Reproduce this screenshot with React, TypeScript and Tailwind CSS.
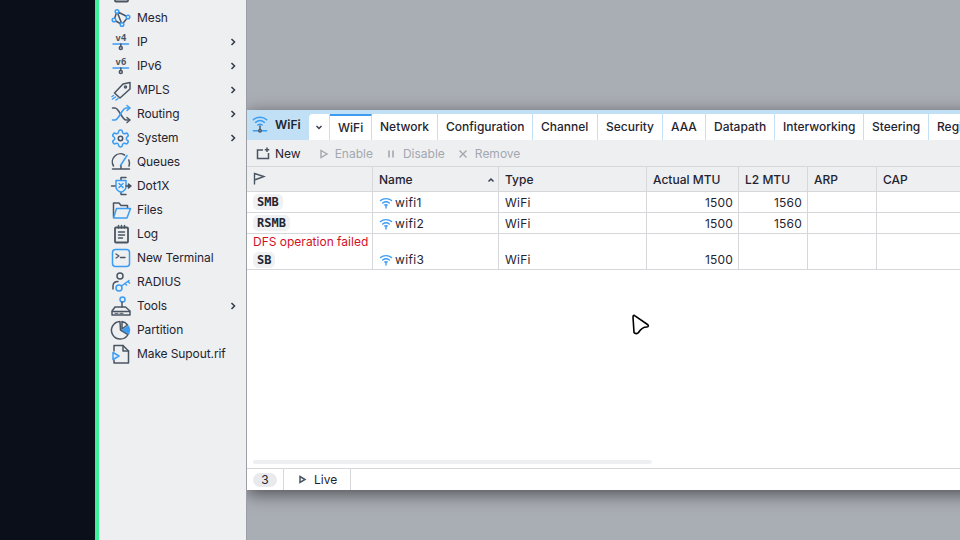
import type { ReactNode } from 'react';

const DARK = '#4a5563';
const BLUE = '#3b9cf2';

function Icon({ children }: { children: ReactNode }) {
  return (
    <svg width="22" height="22" viewBox="0 0 22 22" fill="none" strokeWidth="1.5" strokeLinecap="round" strokeLinejoin="round" className="shrink-0">
      {children}
    </svg>
  );
}

const MeshIcon = () => (
  <Icon>
    <path d="M7 4.5 L18 10 L12 17.5 Z M7 4.5 L4 13 L12 17.5" stroke={DARK} />
    <circle cx="7" cy="4.5" r="1.8" stroke={BLUE} fill="#eeeff1" />
    <circle cx="18" cy="10" r="1.8" stroke={BLUE} fill="#eeeff1" />
    <circle cx="4" cy="13" r="1.8" stroke={BLUE} fill="#eeeff1" />
    <circle cx="12" cy="17.5" r="1.8" stroke={BLUE} fill="#eeeff1" />
  </Icon>
);

const IpIcon = ({ label }: { label: string }) => (
  <Icon>
    <text x="10.8" y="10" textAnchor="middle" fontSize="9.5" fontWeight="700" fontFamily="'DejaVu Sans Mono', monospace" fill={DARK}>{label}</text>
    <path d="M3 13 H18.5" stroke={BLUE} />
    <path d="M10.8 13 V15.5" stroke={DARK} />
    <circle cx="10.8" cy="17" r="1.5" stroke={DARK} />
  </Icon>
);

const MplsIcon = () => (
  <Icon>
    <path d="M10 19 L4.5 14 L13 5 L20 3.5 L20 10 Z" stroke={DARK} />
    <circle cx="15.5" cy="8" r="1" stroke={DARK} />
    <path d="M2.5 20 L5.5 18 M6 21 L8 19.5 M2 17.5 L3.5 16.5" stroke={BLUE} />
  </Icon>
);

const RoutingIcon = () => (
  <Icon>
    <path d="M2.5 5 H5 C9 5 12 17 16 17 H19.5" stroke={DARK} />
    <path d="M2.5 17 H5 C9 17 12 5 16 5 H19.5" stroke={BLUE} />
    <path d="M17 2.5 L20 5 L17 7.5" stroke={BLUE} />
    <path d="M17 14.5 L20 17 L17 19.5" stroke={DARK} />
  </Icon>
);

const SystemIcon = () => (
  <Icon>
    <g transform="translate(0.3 1.3) scale(0.85)">
      <path
        stroke={BLUE}
        strokeWidth="1.8"
        d="M12.22 2h-.44a2 2 0 0 0-2 2v.18a2 2 0 0 1-1 1.73l-.43.25a2 2 0 0 1-2 0l-.15-.08a2 2 0 0 0-2.73.73l-.22.38a2 2 0 0 0 .73 2.73l.15.1a2 2 0 0 1 1 1.72v.51a2 2 0 0 1-1 1.74l-.15.09a2 2 0 0 0-.73 2.73l.22.38a2 2 0 0 0 2.73.73l.15-.08a2 2 0 0 1 2 0l.43.25a2 2 0 0 1 1 1.73V20a2 2 0 0 0 2 2h.44a2 2 0 0 0 2-2v-.18a2 2 0 0 1 1-1.73l.43-.25a2 2 0 0 1 2 0l.15.08a2 2 0 0 0 2.73-.73l.22-.39a2 2 0 0 0-.73-2.73l-.15-.08a2 2 0 0 1-1-1.74v-.5a2 2 0 0 1 1-1.74l.15-.09a2 2 0 0 0 .73-2.73l-.22-.38a2 2 0 0 0-2.73-.73l-.15.08a2 2 0 0 1-2 0l-.43-.25a2 2 0 0 1-1-1.73V4a2 2 0 0 0-2-2z"
      />
      <circle cx="12" cy="12" r="2.6" stroke={DARK} strokeWidth="1.8" />
    </g>
  </Icon>
);

const QueuesIcon = () => (
  <Icon>
    <path d="M3.5 15 A8 8 0 0 1 14.5 4" stroke={DARK} />
    <path d="M18.8 9 A8 8 0 0 1 19 15" stroke={DARK} />
    <path d="M10.5 14.5 L17 4.5" stroke={BLUE} />
    <path d="M2.5 18 H19.5 M11 15 V18" stroke={DARK} />
  </Icon>
);

const DotIcon = () => (
  <Icon>
    <path d="M11 2.5 H16 M11 19.5 H16 M11 2.5 V5 M11 17 V19.5" stroke={DARK} />
    <path d="M6 5.5 H16 V12 C16 15 13 16.5 11 17.5 C9 16.5 6 15 6 12 Z" stroke={BLUE} />
    <path d="M9 8.5 L13 12.5 M13 8.5 L9 12.5" stroke={BLUE} />
    <path d="M1.5 11 H5 M16 11 H19" stroke={DARK} />
    <path d="M18.5 9 L21 11 L18.5 13 Z" fill={DARK} stroke={DARK} />
  </Icon>
);

const FilesIcon = () => (
  <Icon>
    <path d="M3.5 18 V4 H9 L11 6.5 H17.5 V9" stroke={DARK} />
    <path d="M3.5 19 L6.5 9.5 H20.5 L17 19 Z" stroke={BLUE} />
  </Icon>
);

const LogIcon = () => (
  <Icon>
    <rect x="5" y="4.5" width="13" height="15" rx="1" stroke={DARK} strokeWidth="1.8" />
    <path d="M8.5 2.5 V5 M11.5 2.5 V5 M14.5 2.5 V5" stroke={DARK} />
    <path d="M8.5 9 H14.5 M8.5 12 H14.5 M8.5 15 H12.5" stroke={DARK} />
  </Icon>
);

const TerminalIcon = () => (
  <Icon>
    <rect x="2.5" y="2.5" width="17" height="17" rx="3" stroke={BLUE} />
    <path d="M6 7 L9 9 L6 11" stroke={DARK} strokeWidth="1.2" />
    <path d="M10.5 10.5 H15" stroke={DARK} />
  </Icon>
);

const RadiusIcon = () => (
  <Icon>
    <circle cx="10" cy="5" r="3" stroke={DARK} />
    <path d="M3 18 V15 C3 12 5 10.5 8 10.5" stroke={DARK} />
    <circle cx="9" cy="17" r="3" stroke={BLUE} />
    <path d="M11.5 15 L19 9.5 M15 12.5 L16.5 14 M18 10.5 L19.5 12" stroke={BLUE} />
  </Icon>
);

const ToolsIcon = () => (
  <Icon>
    <circle cx="12.5" cy="4.5" r="2.5" stroke={BLUE} />
    <path d="M12 7 V12" stroke={DARK} />
    <path d="M8 12 H15.5 L20 16 V20 H2 V16 L5 12 H8 M2 16.5 H20" stroke={DARK} />
    <path d="M5 18.3 H8 M10 18.3 H13" stroke={DARK} strokeWidth="1" />
  </Icon>
);

const PartitionIcon = () => (
  <Icon>
    <path d="M10 2.5 A8.8 8.8 0 1 0 18 15.5 L10.5 11 Z" stroke={DARK} strokeWidth="1.5" />
    <path d="M12 2.5 A8.8 8.8 0 0 1 17.5 6 L12 10 Z" stroke={DARK} strokeWidth="1.5" />
    <path d="M13 11 L18.5 7.2 A9 9 0 0 1 18.8 14.5 Z" fill={BLUE} stroke={BLUE} />
  </Icon>
);

const SupoutIcon = () => (
  <Icon>
    <path d="M4 8 V2.5 H13 L18.5 8 V20 H4 V17" stroke={DARK} />
    <path d="M13 2.5 V8 H18.5" stroke={DARK} />
    <path d="M3 9.5 L9 13 L3 16.5 Z" stroke={BLUE} />
  </Icon>
);

const menu: { label: string; icon: ReactNode; sub?: boolean }[] = [
  { label: 'Mesh', icon: <MeshIcon /> },
  { label: 'IP', icon: <IpIcon label="v4" />, sub: true },
  { label: 'IPv6', icon: <IpIcon label="v6" />, sub: true },
  { label: 'MPLS', icon: <MplsIcon />, sub: true },
  { label: 'Routing', icon: <RoutingIcon />, sub: true },
  { label: 'System', icon: <SystemIcon />, sub: true },
  { label: 'Queues', icon: <QueuesIcon /> },
  { label: 'Dot1X', icon: <DotIcon /> },
  { label: 'Files', icon: <FilesIcon /> },
  { label: 'Log', icon: <LogIcon /> },
  { label: 'New Terminal', icon: <TerminalIcon /> },
  { label: 'RADIUS', icon: <RadiusIcon /> },
  { label: 'Tools', icon: <ToolsIcon />, sub: true },
  { label: 'Partition', icon: <PartitionIcon /> },
  { label: 'Make Supout.rif', icon: <SupoutIcon /> },
];

const tabs = [
  { label: 'WiFi', w: 'w-[42px]', active: true },
  { label: 'Network', w: 'w-[66px]' },
  { label: 'Configuration', w: 'w-[95px]' },
  { label: 'Channel', w: 'w-[65px]' },
  { label: 'Security', w: 'w-[65px]' },
  { label: 'AAA', w: 'w-[43px]' },
  { label: 'Datapath', w: 'w-[69px]' },
  { label: 'Interworking', w: 'w-[89px]' },
  { label: 'Steering', w: 'w-[65px]' },
  { label: 'Regi', w: 'w-[60px]' },
];

const columns = ['w-[126px]', 'w-[126px]', 'w-[148px]', 'w-[92px]', 'w-[69px]', 'w-[69px]', 'w-[120px]'];

const rows = [
  { chip: 'SMB', name: 'wifi1', actual: '1500', l2: '1560', height: 'h-[21px]' },
  { chip: 'RSMB', name: 'wifi2', actual: '1500', l2: '1560', height: 'h-[21px]' },
  { chip: 'SB', name: 'wifi3', actual: '1500', l2: '', height: 'h-[36px]', error: 'DFS operation failed' },
];

function Chevron() {
  return (
    <svg width="8" height="8" viewBox="0 0 8 8" fill="none" stroke="#374151" strokeWidth="1.6" className="ml-auto mr-[9px]">
      <path d="M2.5 1 L5.5 4 L2.5 7" />
    </svg>
  );
}

function WifiSmall() {
  return (
    <svg width="14" height="12" viewBox="0 0 14 12" fill="none" stroke={BLUE} strokeWidth="1.4" strokeLinecap="round" className="shrink-0">
      <path d="M1.5 3.5 C4.5 1 9.5 1 12.5 3.5" />
      <path d="M3.7 6 C5.7 4.5 8.3 4.5 10.3 6" />
      <path d="M7 8 V11" />
      <path d="M5.8 8 H8.2" />
    </svg>
  );
}

function ToolButton({ icon, label, disabled, className }: { icon: ReactNode; label: string; disabled?: boolean; className: string }) {
  return (
    <div className={`flex items-center ${className} ${disabled ? 'text-[#a3a8b0]' : 'text-[#1f2430]'}`}>
      {icon}
      <span>{label}</span>
    </div>
  );
}

function HeaderCell({ width, children, last }: { width: string; children: ReactNode; last?: boolean }) {
  return (
    <div className={`${width} shrink-0 flex items-center px-[6px] pt-[2px] font-medium ${last ? '' : 'border-r border-[#d5d7db]'}`}>
      {children}
    </div>
  );
}

export default function App() {
  return (
    <div className="w-[960px] h-[540px] flex overflow-hidden bg-[#0b0f19] font-['Inter',sans-serif] text-[12px] text-[#1f2430]">
      <div className="w-[95px] shrink-0 bg-[#0b0f19]" />
      <div className="w-[4px] shrink-0 bg-[#3df29a]" />

      <nav className="w-[148px] shrink-0 bg-[#eeeff1] border-r border-[#9a9ea5] overflow-hidden tracking-[-0.1px]">
        <div className="h-[6px] overflow-hidden">
          <div className="ml-[11px] -mt-[18px]">
            <LogIcon />
          </div>
        </div>
        {menu.map((item) => (
          <div key={item.label} className="h-[24px] flex items-center pl-[11px]">
            {item.icon}
            <span className="ml-[5px]">{item.label}</span>
            {item.sub && <Chevron />}
          </div>
        ))}
      </nav>

      <main className="flex-1 min-w-0 bg-[#a9adb4] pt-[110px] overflow-hidden">
        <div className="w-[760px] h-[380px] flex flex-col bg-white shadow-[0_4px_16px_rgba(0,0,0,0.55)]">
          <div className="h-[30px] shrink-0 flex items-end bg-[#c1dff5]">
            <div className="w-[62px] h-[30px] flex items-center pl-[5px] gap-[7px] font-semibold">
              <svg width="16" height="18" viewBox="0 0 18 20" fill="none" stroke={BLUE} strokeWidth="1.6" strokeLinecap="round">
                <path d="M1.5 4 C5.5 0.5 12.5 0.5 16.5 4" />
                <path d="M4 7 C7 4.5 11 4.5 14 7" />
                <path d="M6.5 10 C8 9 10 9 11.5 10" />
                <path d="M9 11 V16" stroke={DARK} />
                <path d="M1.5 16.5 H16.5" />
                <circle cx="9" cy="16.5" r="1.4" stroke={DARK} fill="#c1dff5" />
              </svg>
              <span>WiFi</span>
            </div>
            <div className="w-[20px] h-[26px] bg-white rounded-tl-[4px] flex items-center justify-center">
              <svg width="8" height="8" viewBox="0 0 8 8" fill="none" stroke="#374151" strokeWidth="1.5">
                <path d="M1.5 3 L4 5.5 L6.5 3" />
              </svg>
            </div>
            <div className="w-px h-[26px] bg-[#c1dff5]" />
            {tabs.map((tab) => (
              <div
                key={tab.label}
                className={`${tab.w} shrink-0 h-[26px] bg-white border-r border-[#c1dff5] flex items-center pl-[8px] font-medium ${tab.active ? 'border-t-2 border-t-[#3b9cf2]' : ''}`}
              >
                {tab.label}
              </div>
            ))}
          </div>

          <div className="h-[27px] shrink-0 flex items-center gap-[13px] pl-[9px] pt-[2px] bg-[#eeeff1] border-b border-[#d5d7db]">
            <ToolButton
              label="New"
              className="gap-[5px]"
              icon={
                <svg width="14" height="14" viewBox="0 0 14 14" fill="none" stroke={DARK} strokeWidth="1.5">
                  <path d="M7 3 H1.5 V11.5 H12.5 V6" />
                  <path d="M11 0.5 V5 M8.8 2.8 H13.2" stroke={DARK} />
                </svg>
              }
            />
            <ToolButton
              disabled
              label="Enable"
              className="gap-[6px] ml-[5px]"
              icon={
                <svg width="10" height="10" viewBox="0 0 10 10" fill="none" stroke="#a3a8b0" strokeWidth="1.4">
                  <path d="M2 1.5 L8 5 L2 8.5 Z" />
                </svg>
              }
            />
            <ToolButton
              disabled
              label="Disable"
              className="gap-[7px]"
              icon={
                <svg width="10" height="10" viewBox="0 0 10 10" fill="none" stroke="#a3a8b0" strokeWidth="1.6">
                  <path d="M3 1.5 V8.5 M7 1.5 V8.5" />
                </svg>
              }
            />
            <ToolButton
              disabled
              label="Remove"
              className="gap-[7px]"
              icon={
                <svg width="10" height="10" viewBox="0 0 10 10" fill="none" stroke="#a3a8b0" strokeWidth="1.4">
                  <path d="M1.5 1.5 L8.5 8.5 M8.5 1.5 L1.5 8.5" />
                </svg>
              }
            />
          </div>

          <div className="h-[25px] shrink-0 flex bg-[#eeeff1] border-b border-[#d5d7db]">
            <HeaderCell width={columns[0]}>
              <svg width="13" height="13" viewBox="0 0 13 13" fill="none" stroke={DARK} strokeWidth="1.4" className="-mt-[3px]">
                <path d="M1.5 12.5 V1.5 L11 4.5 L1.5 8" />
              </svg>
            </HeaderCell>
            <HeaderCell width={columns[1]}>
              <span>Name</span>
              <svg width="8" height="8" viewBox="0 0 8 8" fill="none" stroke="#374151" strokeWidth="1.5" className="ml-auto -mr-[3px]">
                <path d="M1.5 5.5 L4 3 L6.5 5.5" />
              </svg>
            </HeaderCell>
            <HeaderCell width={columns[2]}>Type</HeaderCell>
            <HeaderCell width={columns[3]}>Actual MTU</HeaderCell>
            <HeaderCell width={columns[4]}>L2 MTU</HeaderCell>
            <HeaderCell width={columns[5]}>ARP</HeaderCell>
            <HeaderCell width={columns[6]} last>CAP</HeaderCell>
          </div>

          {rows.map((row) => (
            <div key={row.chip} className={`${row.height} shrink-0 flex border-b border-[#d5d7db] tracking-[0.2px]`}>
              <div className={`${columns[0]} shrink-0 border-r border-[#d5d7db] px-[6px] flex flex-col justify-end`}>
                {row.error && <div className="text-[#d4101f] leading-[16px] whitespace-nowrap tracking-normal">{row.error}</div>}
                <div className="h-[20px] flex items-center">
                  <span className="bg-[#f0f1f3] rounded-[5px] px-[4px] h-[16px] leading-[16px] font-['DejaVu_Sans_Mono',monospace] font-bold text-[12px] tracking-normal">
                    {row.chip}
                  </span>
                </div>
              </div>
              <div className={`${columns[1]} shrink-0 border-r border-[#d5d7db] px-[6px] flex items-end`}>
                <div className="h-[20px] flex items-center gap-[2px] pt-[2px] tracking-[0.35px]">
                  <WifiSmall />
                  <span>{row.name}</span>
                </div>
              </div>
              <div className={`${columns[2]} shrink-0 border-r border-[#d5d7db] px-[6px] flex items-end`}>
                <div className="h-[20px] flex items-center pt-[2px]">WiFi</div>
              </div>
              <div className={`${columns[3]} shrink-0 border-r border-[#d5d7db] px-[5px] flex items-end justify-end`}>
                <div className="h-[20px] flex items-center pt-[2px]">{row.actual}</div>
              </div>
              <div className={`${columns[4]} shrink-0 border-r border-[#d5d7db] px-[5px] flex items-end justify-end`}>
                <div className="h-[20px] flex items-center pt-[2px]">{row.l2}</div>
              </div>
              <div className={`${columns[5]} shrink-0 border-r border-[#d5d7db]`} />
              <div className={`${columns[6]} shrink-0`} />
            </div>
          ))}

          <div className="flex-1 flex flex-col justify-end pl-[6px] pb-[4px]">
            <div className="w-[399px] h-[4px] rounded-full bg-[#eeeff1]" />
          </div>

          <div className="h-[22px] shrink-0 flex border-t border-[#d5d7db]">
            <div className="w-[37px] border-r border-[#d5d7db] flex items-center pl-[6px]">
              <span className="w-[24px] h-[14px] rounded-full bg-[#e8eaed] flex items-center justify-center leading-none">3</span>
            </div>
            <div className="w-[67px] border-r border-[#d5d7db] flex items-center pl-[14px] gap-[7px]">
              <svg width="9" height="9" viewBox="0 0 9 9" fill="none" stroke={DARK} strokeWidth="1.5">
                <path d="M2 1.5 L7 4.5 L2 7.5 Z" />
              </svg>
              <span>Live</span>
            </div>
          </div>
        </div>
      </main>

      <svg width="20" height="24" viewBox="0 0 20 24" fill="#ffffff" stroke="#000000" strokeWidth="1.6" strokeLinejoin="round" className="absolute left-[631px] top-[314px]">
        <path d="M2 3 C2 1.5 3 1 4 1.8 L16.5 10.5 C18 11.5 17.5 13 16 13 C13 13 10 14.5 7.5 18.5 C6.5 20 4 20 3 18.5 Z" />
      </svg>
    </div>
  );
}
